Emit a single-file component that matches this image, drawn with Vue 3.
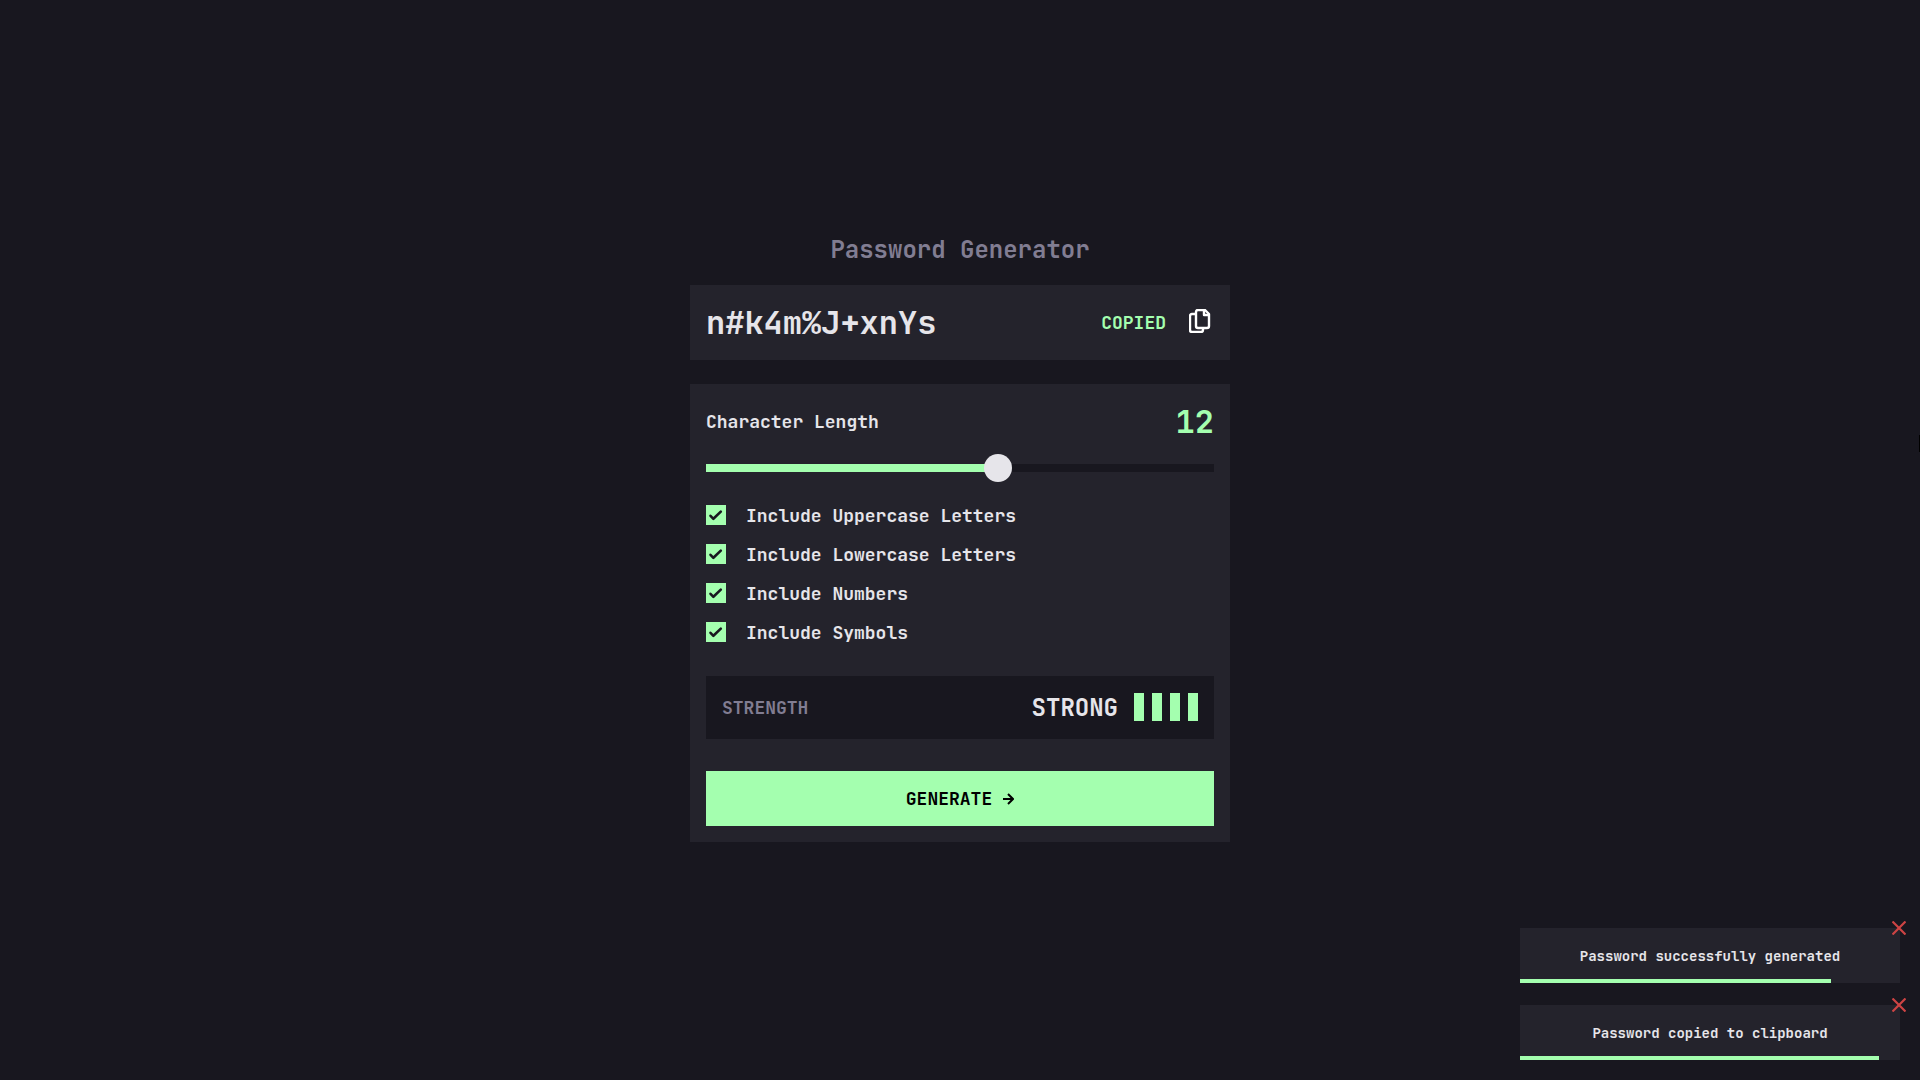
<script setup>
import { computed, ref } from 'vue'

const password = ref('n#k4m%J+xnYs')
const length = ref(12)
const min = 1
const max = 20

const options = ref([
  { id: 'uppercase', label: 'Include Uppercase Letters', checked: true },
  { id: 'lowercase', label: 'Include Lowercase Letters', checked: true },
  { id: 'numbers', label: 'Include Numbers', checked: true },
  { id: 'symbols', label: 'Include Symbols', checked: true },
])

const toasts = ref([
  { id: 1, text: 'Password successfully generated', progress: 81.8 },
  { id: 2, text: 'Password copied to clipboard', progress: 94.5 },
])

const fill = computed(() => `${((length.value - min) / (max - min)) * 100}%`)

function dismiss(id) {
  toasts.value = toasts.value.filter((toast) => toast.id !== id)
}
</script>

<template>
  <main class="page">
    <div class="generator">
      <h1 class="title">Password Generator</h1>

      <section class="output">
        <span class="password">{{ password }}</span>
        <div class="copy">
          <span class="copied">COPIED</span>
          <button class="copy-button" type="button" aria-label="Copy password">
            <svg viewBox="0 0 22 24" width="22" height="24" fill="none" stroke="currentColor" stroke-width="2.4" stroke-linejoin="round">
              <path d="M7 5H3Q1 5 1 7V21Q1 23 3 23H12Q14 23 14 21V19" />
              <path d="M9 1H16L20 5V17Q20 19 18 19H9Q7 19 7 17V3Q7 1 9 1Z" />
              <path d="M15 1V6H20" />
            </svg>
          </button>
        </div>
      </section>

      <form class="settings" @submit.prevent>
        <div class="length-row">
          <label for="length">Character Length</label>
          <output class="length-value" for="length">{{ length }}</output>
        </div>
        <input id="length" v-model.number="length" class="slider" type="range" :min="min" :max="max" :style="{ '--fill': fill }" />

        <ul class="options">
          <li v-for="option in options" :key="option.id">
            <label class="option" :for="option.id">
              <span class="box">
                <input :id="option.id" v-model="option.checked" class="checkbox" type="checkbox" />
                <svg v-if="option.checked" class="tick" viewBox="0 0 20 20" width="20" height="20" fill="none" stroke="currentColor" stroke-width="2.6" stroke-linecap="round" stroke-linejoin="round" aria-hidden="true">
                  <path d="M4.5 10.8L7.4 13.8L14.8 6.6" />
                </svg>
              </span>
              {{ option.label }}
            </label>
          </li>
        </ul>

        <div class="strength">
          <span class="strength-label">STRENGTH</span>
          <div class="meter">
            <span class="rating">STRONG</span>
            <span class="bars">
              <span v-for="n in 4" :key="n" class="bar"></span>
            </span>
          </div>
        </div>

        <button class="generate" type="submit">
          GENERATE
          <svg viewBox="0 0 11 12" width="11" height="12" fill="none" stroke="currentColor" stroke-width="2" aria-hidden="true">
            <path d="M0 6H10M5 1L10 6L5 11" />
          </svg>
        </button>
      </form>
    </div>

    <aside class="toasts" aria-live="polite">
      <div v-for="toast in toasts" :key="toast.id" class="toast">
        {{ toast.text }}
        <button class="close" type="button" aria-label="Dismiss" @click="dismiss(toast.id)">
          <svg viewBox="0 0 14 14" width="14" height="14" fill="none" stroke="currentColor" stroke-width="2.2">
            <path d="M0.5 0.5L13.5 13.5M13.5 0.5L0.5 13.5" />
          </svg>
        </button>
        <div class="progress" :style="{ width: toast.progress + '%' }"></div>
      </div>
    </aside>

    <div class="edge-mark" aria-hidden="true"></div>
  </main>
</template>

<style>
body {
  background: #18171f;
}
</style>

<style scoped>
.page {
  --dark: #18171f;
  --panel: #24232c;
  --light: #e6e5ea;
  --green: #a4ffaf;
  --muted: #817d92;
  box-sizing: border-box;
  min-height: 100vh;
  padding-bottom: 5px;
  display: flex;
  align-items: center;
  justify-content: center;
  background: var(--dark);
  color: var(--light);
  font: 700 18px/24px "JetBrains Mono", "DejaVu Sans Mono", monospace;
}

button {
  border: 0;
  padding: 0;
  font: inherit;
  cursor: pointer;
}

svg {
  display: block;
}

.generator {
  width: 100%;
  max-width: 540px;
}

.title {
  margin: 0 0 18px;
  color: var(--muted);
  font-size: 24px;
  line-height: 34px;
  text-align: center;
}

.output {
  display: flex;
  align-items: center;
  justify-content: space-between;
  padding: 16px;
  margin-bottom: 24px;
  background: var(--panel);
}

.password {
  font-size: 32px;
  line-height: 43px;
}

.copy {
  display: flex;
  align-items: center;
  gap: 23px;
  padding-right: 3px;
  color: var(--green);
}

.copy-button {
  margin-bottom: 4px;
  background: none;
  color: #fff;
}

.settings {
  padding: 16px;
  background: var(--panel);
}

.length-row {
  display: flex;
  align-items: center;
  justify-content: space-between;
}

.length-value {
  color: var(--green);
  font-size: 32px;
  line-height: 43px;
}

.slider {
  display: block;
  width: 100%;
  height: 28px;
  margin: 11px 0 22px;
  appearance: none;
  background: linear-gradient(to right, var(--green) var(--fill), var(--dark) var(--fill)) center / 100% 8px no-repeat;
  cursor: pointer;
}

.slider::-webkit-slider-thumb {
  appearance: none;
  width: 28px;
  height: 28px;
  border-radius: 50%;
  background: var(--light);
}

.options {
  display: flex;
  flex-direction: column;
  gap: 15px;
  margin: 0 0 31px;
  padding: 0;
  list-style: none;
}

.option {
  display: flex;
  align-items: center;
  gap: 20px;
  cursor: pointer;
}

.box {
  display: grid;
  margin-bottom: 2px;
}

.checkbox {
  grid-area: 1 / 1;
  box-sizing: border-box;
  width: 20px;
  height: 20px;
  margin: 0;
  appearance: none;
  border: 2px solid var(--light);
}

.checkbox:checked {
  border: 0;
  background: var(--green);
}

.tick {
  grid-area: 1 / 1;
  z-index: 1;
  color: var(--dark);
  pointer-events: none;
}

.strength {
  display: flex;
  align-items: center;
  justify-content: space-between;
  padding: 16px;
  margin-bottom: 32px;
  background: var(--dark);
}

.strength-label {
  color: var(--muted);
}

.meter {
  display: flex;
  align-items: center;
  gap: 16px;
}

.rating {
  font-size: 24px;
  line-height: 31px;
}

.bars {
  display: flex;
  gap: 8px;
  margin-bottom: 1px;
}

.bar {
  width: 10px;
  height: 28px;
  background: var(--green);
}

.generate {
  display: flex;
  align-items: center;
  justify-content: center;
  gap: 11px;
  width: 100%;
  height: 55px;
  background: var(--green);
  color: #000;
}

.toasts {
  position: fixed;
  right: 20px;
  bottom: 20px;
  display: flex;
  flex-direction: column;
  gap: 22px;
  width: 380px;
}

.toast {
  position: relative;
  padding: 19px 16px 17px;
  background: var(--panel);
  font-size: 14px;
  line-height: 19px;
  text-align: center;
}

.close {
  position: absolute;
  top: -7px;
  right: -6px;
  background: none;
  color: #cd4444;
}

.progress {
  position: absolute;
  left: 0;
  bottom: 0;
  height: 4px;
  background: var(--green);
}

.edge-mark {
  position: fixed;
  top: 435px;
  right: 0;
  width: 1px;
  height: 17px;
  background: #000;
}
</style>
